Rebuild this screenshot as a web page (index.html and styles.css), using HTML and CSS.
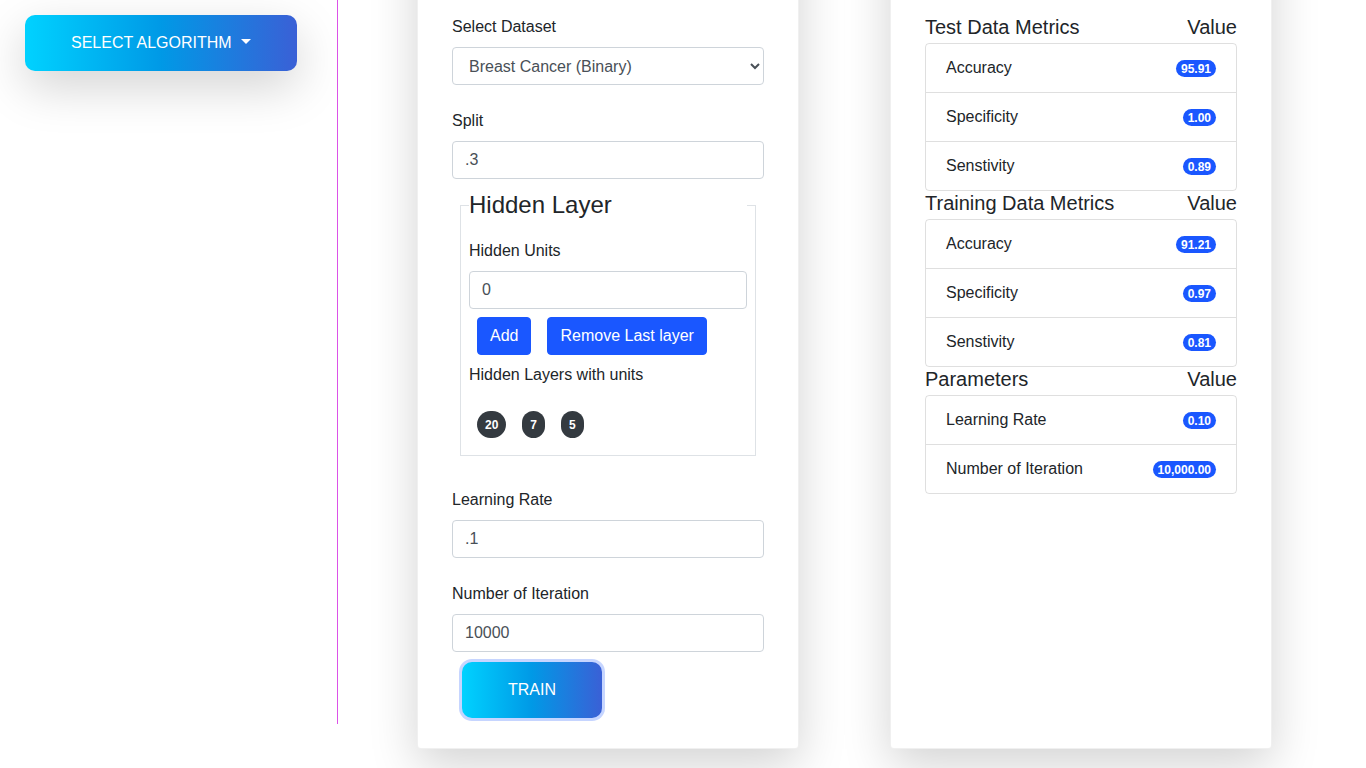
FILE: index.html
```html
<!DOCTYPE html>
<html lang="en">
<head>
<meta charset="utf-8">
<title>Neural Network</title>
<link rel="stylesheet" href="styles.css">
</head>
<body>
<div class="page">
  <aside class="sidebar">
    <button class="btn-grad select-btn" type="button">Select Algorithm<span class="caret"></span></button>
  </aside>
  <main class="main">
    <section class="card">
      <label class="form-label">Select Dataset</label>
      <select class="form-control select">
        <option>Breast Cancer (Binary)</option>
      </select>
      <label class="form-label group-gap">Split</label>
      <input class="form-control" type="text" value=".3">
      <fieldset class="layers">
        <legend>Hidden Layer</legend>
        <label class="form-label">Hidden Units</label>
        <input class="form-control" type="text" value="0">
        <div class="btn-row">
          <button class="btn btn-primary" type="button">Add</button>
          <button class="btn btn-primary" type="button">Remove Last layer</button>
        </div>
        <div class="layers-title">Hidden Layers with units</div>
        <div class="badge-row">
          <span class="badge badge-dark">20</span>
          <span class="badge badge-dark">7</span>
          <span class="badge badge-dark">5</span>
        </div>
      </fieldset>
      <label class="form-label">Learning Rate</label>
      <input class="form-control" type="text" value=".1">
      <label class="form-label group-gap">Number of Iteration</label>
      <input class="form-control" type="text" value="10000">
      <button class="btn-grad train-btn" type="button">Train</button>
    </section>

    <section class="card">
      <div class="metric-head"><span>Test Data Metrics</span><span>Value</span></div>
      <ul class="list">
        <li class="item"><span>Accuracy</span><span class="badge badge-primary">95.91</span></li>
        <li class="item"><span>Specificity</span><span class="badge badge-primary">1.00</span></li>
        <li class="item"><span>Senstivity</span><span class="badge badge-primary">0.89</span></li>
      </ul>
      <div class="metric-head"><span>Training Data Metrics</span><span>Value</span></div>
      <ul class="list">
        <li class="item"><span>Accuracy</span><span class="badge badge-primary">91.21</span></li>
        <li class="item"><span>Specificity</span><span class="badge badge-primary">0.97</span></li>
        <li class="item"><span>Senstivity</span><span class="badge badge-primary">0.81</span></li>
      </ul>
      <div class="metric-head"><span>Parameters</span><span>Value</span></div>
      <ul class="list">
        <li class="item"><span>Learning Rate</span><span class="badge badge-primary">0.10</span></li>
        <li class="item"><span>Number of Iteration</span><span class="badge badge-primary">10,000.00</span></li>
      </ul>
    </section>
  </main>
</div>
<script src="script.js"></script>
</body>
</html>
```

FILE: styles.css
```css
* {
  box-sizing: border-box;
}

html, body {
  margin: 0;
  padding: 0;
}

body {
  font-family: "Liberation Sans", Arial, sans-serif;
  font-size: 16px;
  line-height: 24px;
  color: #212529;
  background: #fff;
}

.page {
  display: flex;
  align-items: flex-start;
  min-height: 1010px;
}

.sidebar {
  width: 338px;
  height: 921px;
  flex: 0 0 338px;
  border-right: 1px solid #dc52e8;
  padding: 212px 25px 0;
}

.btn-grad {
  border: 0;
  color: #fff;
  font-family: inherit;
  font-size: 16px;
  line-height: 24px;
  text-transform: uppercase;
  border-radius: 10px;
  background-image: linear-gradient(to right, #00d2ff 0%, #0099e6 50%, #3a60d6 100%);
  cursor: pointer;
}

.select-btn {
  padding: 16px 46px;
  box-shadow: 0 16px 48px rgba(0, 0, 0, 0.175);
}

.caret {
  display: inline-block;
  margin-left: 9px;
  vertical-align: 4px;
  border-top: 5px solid #fff;
  border-left: 5px solid transparent;
  border-right: 5px solid transparent;
}

.main {
  flex: 1;
  display: flex;
  gap: 91px;
  padding: 24px 0 65px 79px;
}

.card {
  width: 382px;
  flex: 0 0 382px;
  display: flex;
  flex-direction: column;
  background: #fff;
  border: 1px solid rgba(0, 0, 0, 0.06);
  border-radius: 4px;
  box-shadow: 0 16px 48px rgba(0, 0, 0, 0.175);
  padding: 187px 34px 20px;
}

.form-label {
  display: block;
  margin-bottom: 8px;
}

.group-gap {
  margin-top: 24px;
}

.form-control {
  display: block;
  width: 100%;
  height: 38px;
  padding: 6px 12px;
  font-family: inherit;
  font-size: 16px;
  line-height: 24px;
  color: #495057;
  background: #fff;
  border: 1px solid #ced4da;
  border-radius: 4px;
}

.layers {
  margin: 8px 8px 32px;
  padding: 16px 8px 9px;
  border: 1px solid #dee2e6;
  min-width: 0;
}

.layers legend {
  width: 100%;
  padding: 0;
  font-size: 24px;
  line-height: 36px;
}

.btn-row {
  display: flex;
}

.btn {
  margin: 8px;
  padding: 6px 12px;
  font-family: inherit;
  font-size: 16px;
  line-height: 24px;
  border: 1px solid transparent;
  border-radius: 4px;
  cursor: pointer;
}

.btn-primary {
  color: #fff;
  background: #1a57ff;
  border-color: #1a57ff;
}

.layers-title {
  line-height: 24px;
}

.badge-row {
  display: flex;
  padding-top: 16px;
}

.badge {
  display: inline-block;
  font-size: 12px;
  font-weight: 700;
  line-height: 1;
  color: #fff;
  border-radius: 160px;
  white-space: nowrap;
}

.badge-dark {
  background: #343a40;
  padding: 8px 8px 7px;
  margin: 8px;
}

.badge-primary {
  background: #1a57ff;
  padding: 3px 5px 2px;
}

.train-btn {
  align-self: flex-start;
  margin: 10px 0 10px 10px;
  width: 140px;
  padding: 16px 0;
  box-shadow: 0 0 0 3px rgba(26, 87, 255, 0.25);
}

.metric-head {
  display: flex;
  justify-content: space-between;
  font-size: 20px;
  line-height: 24px;
  margin-bottom: 4px;
}

.list {
  list-style: none;
  margin: 0;
  padding: 0;
  border: 1px solid rgba(0, 0, 0, 0.125);
  border-radius: 4px;
}

.item {
  display: flex;
  justify-content: space-between;
  align-items: center;
  padding: 12px 20px;
  line-height: 24px;
}

.item + .item {
  border-top: 1px solid rgba(0, 0, 0, 0.125);
}
```

FILE: script.js
```js
window.scrollTo(0, 197);
```
